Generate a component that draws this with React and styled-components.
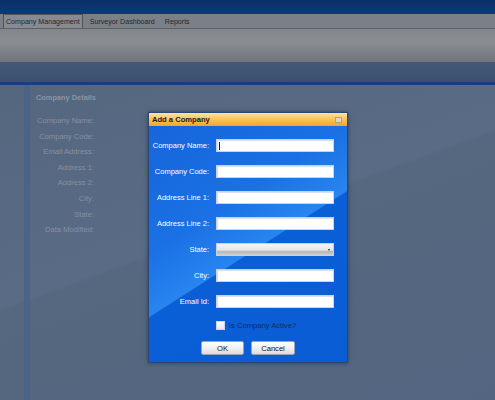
import styled, { createGlobalStyle } from "styled-components";

const Global = createGlobalStyle`
  html, body { margin: 0; padding: 0; }
  body {
    font-family: "Liberation Sans", Arial, sans-serif;
    background: #56687f;
  }
`;

const Page = styled.div`
  position: relative;
  width: 495px;
  height: 400px;
  overflow: hidden;
  display: flex;
  flex-direction: column;
`;

const TopBar = styled.div`
  height: 14px;
  background: linear-gradient(to bottom, #0b2f66, #0a3a78);
`;

const TabStrip = styled.div`
  height: 14px;
  background: #7b7f86;
  border-bottom: 1px solid #5d6168;
  display: flex;
  align-items: stretch;
  padding-left: 3px;
  gap: 4px;
`;

const Tab = styled.div`
  display: flex;
  align-items: center;
  padding: 0 2px 0 2px;
  font-size: 7.1px;
  color: #24282e;
  border: 1px solid ${(p) => (p.active ? "#50545a" : "transparent")};
  border-bottom: none;
  background: ${(p) => (p.active ? "#878b91" : "transparent")};
`;

const Toolbar = styled.div`
  height: 33px;
  background: linear-gradient(to bottom, #83868b 0%, #8a8d92 40%, #70747b 100%);
`;

const Band = styled.div`
  height: 20px;
  background: linear-gradient(to bottom, #44597a, #3b506d);
`;

const BlueLine = styled.div`
  height: 3px;
  background: #173f7e;
`;

const Content = styled.div`
  flex: 1;
  display: flex;
  background: linear-gradient(160deg, #55677f 0%, #5a6c85 45%, #56687f 46%, #536580 100%);
`;

const LeftCol = styled.div`
  width: 24px;
`;

const Divider = styled.div`
  width: 6px;
  background: #4b6387;
`;

const Main = styled.div`
  flex: 1;
  display: flex;
  flex-direction: column;
`;

const SectionTitle = styled.div`
  padding: 8px 0 0 6px;
  height: 20px;
  font-size: 7.4px;
  font-weight: bold;
  color: #8894a6;
`;

const DetailGrid = styled.div`
  display: grid;
  grid-template-columns: 64px 1fr;
  row-gap: 6.6px;
  margin-top: 3px;
`;

const DetailLabel = styled.div`
  text-align: right;
  font-size: 7.6px;
  line-height: 9px;
  color: #8490a2;
`;

const Dialog = styled.div`
  position: absolute;
  left: 148px;
  top: 112px;
  width: 198px;
  height: 249px;
  border: 1px solid #2b4670;
  box-shadow: 0 0 4px rgba(20, 30, 50, 0.6);
  display: flex;
  flex-direction: column;
`;

const TitleBar = styled.div`
  height: 13px;
  background: linear-gradient(to bottom, #fde3a4 0%, #f9c25a 50%, #f3a42a 100%);
  display: flex;
  align-items: center;
  justify-content: space-between;
  padding: 0 5px 0 3px;
  font-size: 7.6px;
  font-weight: bold;
  color: #1a1a1a;
`;

const CloseBox = styled.div`
  width: 5px;
  height: 4px;
  border: 1px solid #b9a07a;
  background: #e9d6b0;
`;

const Body = styled.div`
  flex: 1;
  padding: 13px 0 0 0;
  background: linear-gradient(147.5deg, #1566da 0%, #1a70e4 35%, #2885ef 52.6%, #0b5fd6 53%, #0a5cd4 100%);
  display: flex;
  flex-direction: column;
`;

const Form = styled.div`
  display: grid;
  grid-template-columns: 60px 118px;
  column-gap: 7px;
  row-gap: 13px;
`;

const Label = styled.div`
  text-align: right;
  font-size: 7.5px;
  line-height: 13px;
  color: #ffffff;
  white-space: nowrap;
`;

const Input = styled.div`
  height: 11px;
  background: #ffffff;
  border: 1px solid #c8d4e4;
  box-shadow: inset 1px 1px 1px #d8dde5;
  position: relative;
`;

const Caret = styled.div`
  position: absolute;
  left: 2px;
  top: 2px;
  width: 1px;
  height: 8px;
  background: #222;
`;

const Select = styled.div`
  height: 11px;
  border: 1px solid #c8d0dc;
  background: linear-gradient(to bottom, #f4f4f4 0%, #e6e6e6 55%, #b5b5b5 70%, #cfcfcf 100%);
  position: relative;
`;

const Arrow = styled.div`
  position: absolute;
  right: 3px;
  top: 5px;
  width: 0;
  height: 0;
  border-left: 1.5px solid transparent;
  border-right: 1.5px solid transparent;
  border-top: 2px solid #222;
`;

const CheckRow = styled.div`
  display: flex;
  align-items: center;
  gap: 4px;
  margin: 13px 0 0 67px;
  height: 9px;
  font-size: 7.6px;
  color: #0c2d66;
`;

const Check = styled.div`
  width: 7px;
  height: 7px;
  border: 1px solid #d0d8e4;
  background: linear-gradient(to bottom, #ffffff, #e4e8ee);
`;

const Buttons = styled.div`
  display: flex;
  justify-content: center;
  gap: 7px;
  margin-top: 11px;
`;

const Button = styled.div`
  width: ${(p) => p.w}px;
  height: 12px;
  border: 1px solid #9aa4b2;
  border-radius: 2px;
  background: linear-gradient(to bottom, #ffffff 0%, #f1f1f1 50%, #dcdcdc 100%);
  display: flex;
  align-items: center;
  justify-content: center;
  font-size: 7.6px;
  color: #111;
`;

const details = [
  "Company Name:",
  "Company Code:",
  "Email Address:",
  "Address 1:",
  "Address 2:",
  "City:",
  "State:",
  "Data Modified:",
];

const fields = [
  { label: "Company Name:", caret: true },
  { label: "Company Code:" },
  { label: "Address Line 1:" },
  { label: "Address Line 2:" },
  { label: "State:", select: true },
  { label: "City:" },
  { label: "Email Id:" },
];

export default function App() {
  return (
    <>
      <Global />
      <Page>
        <TopBar />
        <TabStrip>
          <Tab active>Company Management</Tab>
          <Tab>Surveyor Dashboard</Tab>
          <Tab>Reports</Tab>
        </TabStrip>
        <Toolbar />
        <Band />
        <BlueLine />
        <Content>
          <LeftCol />
          <Divider />
          <Main>
            <SectionTitle>Company Details</SectionTitle>
            <DetailGrid>
              {details.map((d) => (
                <>
                  <DetailLabel key={d}>{d}</DetailLabel>
                  <div />
                </>
              ))}
            </DetailGrid>
          </Main>
        </Content>

        <Dialog>
          <TitleBar>
            <span>Add a Company</span>
            <CloseBox />
          </TitleBar>
          <Body>
            <Form>
              {fields.map((f) => (
                <>
                  <Label key={f.label}>{f.label}</Label>
                  {f.select ? (
                    <Select>
                      <Arrow />
                    </Select>
                  ) : (
                    <Input>{f.caret && <Caret />}</Input>
                  )}
                </>
              ))}
            </Form>
            <CheckRow>
              <Check />
              <span>Is Company Active?</span>
            </CheckRow>
            <Buttons>
              <Button w={41}>OK</Button>
              <Button w={42}>Cancel</Button>
            </Buttons>
          </Body>
        </Dialog>
      </Page>
    </>
  );
}
